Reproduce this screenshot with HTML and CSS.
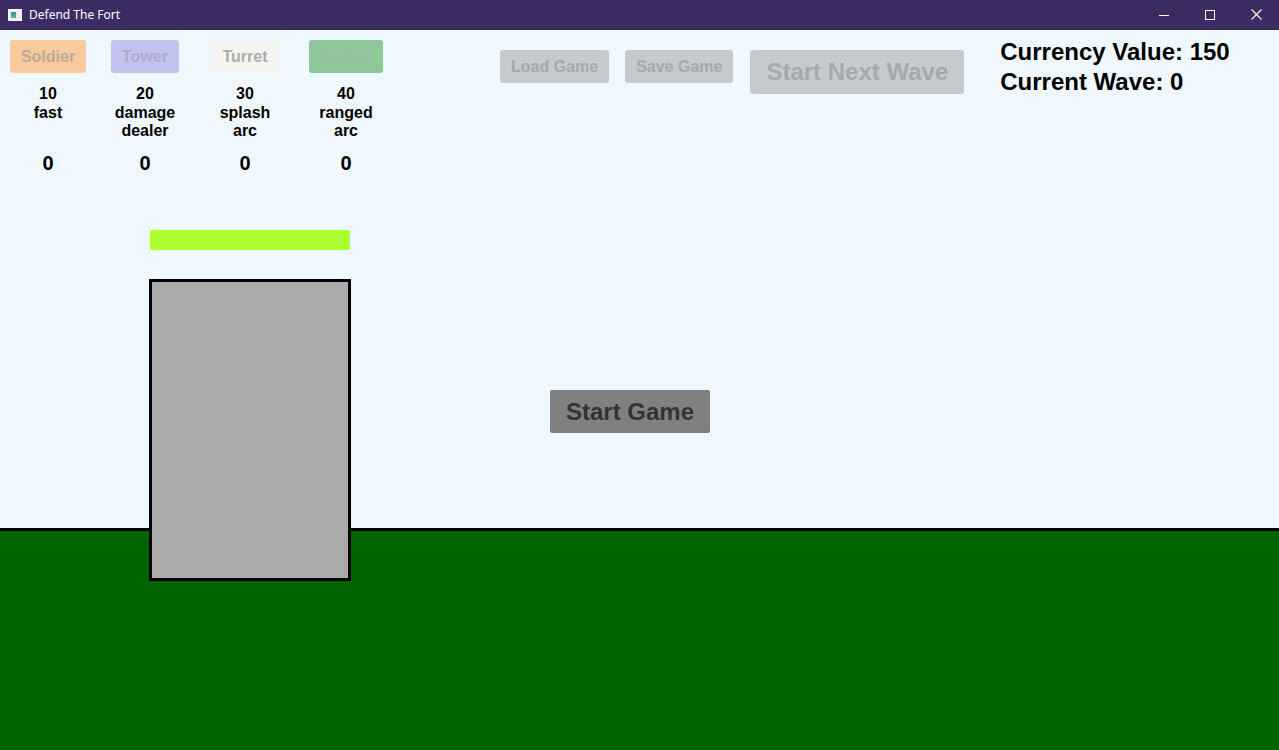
FILE: index.html
```html
<!DOCTYPE html>
<html lang="en">
<head>
    <meta charset="UTF-8">
    <meta name="viewport" content="width=device-width, initial-scale=1.0">
    <title>Defend The Fort</title>
    <link rel="stylesheet" href="styles.css">
</head>
<body>
    <div class="titlebar">
        <div class="app-title">
            <span class="app-icon"><span></span></span>
            <span>Defend The Fort</span>
        </div>
        <div class="window-controls">
            <div class="win-btn">
                <svg width="10" height="10" viewBox="0 0 10 10"><path d="M0 5.5h10" stroke="#fff" stroke-width="1"/></svg>
            </div>
            <div class="win-btn">
                <svg width="10" height="10" viewBox="0 0 10 10"><rect x="0.5" y="0.5" width="9" height="9" fill="none" stroke="#fff" stroke-width="1"/></svg>
            </div>
            <div class="win-btn">
                <svg width="11" height="11" viewBox="0 0 11 11"><path d="M0.5 0.5l10 10M10.5 0.5l-10 10" stroke="#fff" stroke-width="1.1"/></svg>
            </div>
        </div>
    </div>

    <div class="game">
        <div class="sky">
            <div class="hud">
                <div class="units">
                    <div class="unit">
                        <button class="unit-btn soldier" disabled>Soldier</button>
                        <div class="unit-info">10<br>fast</div>
                        <div class="unit-count">0</div>
                    </div>
                    <div class="unit">
                        <button class="unit-btn tower" disabled>Tower</button>
                        <div class="unit-info">20<br>damage<br>dealer</div>
                        <div class="unit-count">0</div>
                    </div>
                    <div class="unit">
                        <button class="unit-btn turret" disabled>Turret</button>
                        <div class="unit-info">30<br>splash<br>arc</div>
                        <div class="unit-count">0</div>
                    </div>
                    <div class="unit">
                        <button class="unit-btn archer" disabled>Archer</button>
                        <div class="unit-info">40<br>ranged<br>arc</div>
                        <div class="unit-count">0</div>
                    </div>
                </div>

                <div class="menu">
                    <button class="menu-btn" disabled>Load Game</button>
                    <button class="menu-btn" disabled>Save Game</button>
                    <button class="menu-btn wave-btn" disabled>Start Next Wave</button>
                </div>

                <div class="status">
                    <div>Currency Value: 150</div>
                    <div>Current Wave: 0</div>
                </div>
            </div>

            <button class="start-btn">Start Game</button>
        </div>

        <div class="ground"></div>

        <!-- fort and its health sit on the play field -->
        <div class="fort-health" style="width: 200px;"></div>
        <div class="fort"></div>
    </div>
</body>
</html>
```

FILE: styles.css
```css
* {
    margin: 0;
    padding: 0;
    box-sizing: border-box;
}

body {
    font-family: 'Liberation Sans', Arial, sans-serif;
    width: 1279px;
    height: 750px;
    overflow: hidden;
    background: #f0f8ff;
}

/* window chrome */
.titlebar {
    height: 30px;
    background: #3d2b63;
    border-bottom: 1px solid #35255a;
    display: flex;
    justify-content: space-between;
    align-items: center;
    color: #fff;
}

.app-title {
    display: flex;
    align-items: center;
    gap: 7px;
    padding-left: 8px;
    font-family: 'Noto Sans', 'Open Sans', sans-serif;
    font-size: 12px;
    height: 100%;
}

.app-icon {
    width: 14px;
    height: 12px;
    background: #e9eef2;
    border: 1px solid #f4f6f8;
    display: flex;
    padding: 2px;
}

.app-icon span {
    width: 5px;
    height: 100%;
    background: linear-gradient(180deg, #3f8a8f 0%, #6fb08a 100%);
}

.window-controls {
    display: flex;
    height: 100%;
}

.win-btn {
    width: 46px;
    height: 100%;
    display: flex;
    align-items: center;
    justify-content: center;
}

/* play field */
.game {
    position: relative;
    height: 720px;
    display: flex;
    flex-direction: column;
}

.sky {
    flex: 1;
    position: relative;
}

.ground {
    height: 222px;
    background: #006400;
    border-top: 3px solid #000;
}

.hud {
    display: flex;
    align-items: flex-start;
}

.units {
    display: grid;
    grid-template-columns: 96px 98px 102px 100px;
    margin-top: 10px;
}

.unit {
    display: flex;
    flex-direction: column;
    align-items: center;
}

.unit-btn {
    height: 33px;
    padding: 0 11px;
    border: none;
    border-radius: 3px;
    font-family: inherit;
    font-size: 16px;
    font-weight: 700;
}

.unit-btn.soldier {
    background: #f9ca9b;
    color: #bcab97;
}

.unit-btn.tower {
    background: #c3c3f2;
    color: #adadcb;
}

.unit-btn.turret {
    background: #f4f4f1;
    color: #acacac;
}

.unit-btn.archer {
    background: #8fc69a;
    color: #9abea3;
}

.unit-info {
    margin-top: 12px;
    height: 54px;
    font-size: 16px;
    font-weight: 700;
    line-height: 18.5px;
    text-align: center;
    color: #000;
}

.unit-count {
    margin-top: 12px;
    font-size: 20px;
    font-weight: 700;
    line-height: 24px;
    color: #000;
}

.menu {
    display: flex;
    align-items: flex-start;
    gap: 16px;
    margin-top: 20px;
    margin-left: 104px;
}

.menu-btn {
    height: 33px;
    padding: 0 11px;
    border: none;
    border-radius: 3px;
    background: #c6cacd;
    color: #a5a9ad;
    font-family: inherit;
    font-size: 16px;
    font-weight: 700;
}

.menu-btn.wave-btn {
    height: 44px;
    padding: 0 16px;
    margin-left: 1px;
    font-size: 24px;
}

.status {
    margin-top: 7px;
    margin-left: 36px;
    font-size: 24px;
    font-weight: 700;
    line-height: 29.5px;
    color: #000;
}

.start-btn {
    position: absolute;
    left: 550px;
    top: 360px;
    width: 160px;
    height: 43px;
    border: none;
    border-radius: 2px;
    background: #808080;
    color: #333;
    font-family: inherit;
    font-size: 24px;
    font-weight: 700;
}

.fort-health {
    position: absolute;
    left: 150px;
    top: 200px;
    height: 20px;
    background: #adff2f;
    border-radius: 1px;
}

.fort {
    position: absolute;
    left: 149px;
    top: 249px;
    width: 202px;
    height: 302px;
    background: #aaaaaa;
    border: 3px solid #000;
}
```
